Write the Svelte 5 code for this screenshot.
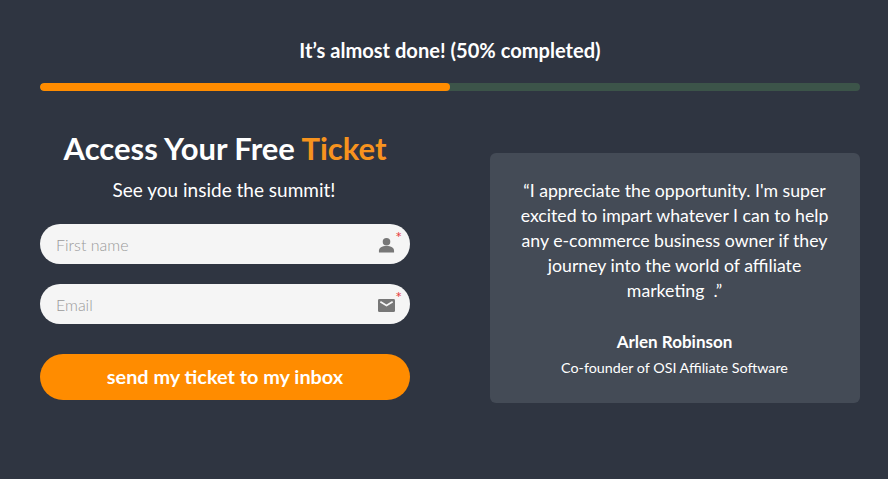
<script>
  const fields = [
    { placeholder: 'First name', icon: 'user' },
    { placeholder: 'Email', icon: 'mail' }
  ];
</script>

<main class="page">
  <h2 class="status">It’s almost done! (50% completed)</h2>
  <div class="track"><div class="fill" style="width: 50%"></div></div>
  <div class="columns">
    <section class="form">
      <h1>Access Your Free <span>Ticket</span></h1>
      <p class="sub">See you inside the summit!</p>
      <div class="fields">
        {#each fields as f}
          <div class="field">
            <input placeholder={f.placeholder} aria-label={f.placeholder} />
            <span class="icon">
              {#if f.icon === 'user'}
                <svg width="17" height="18" viewBox="0 0 18 18"><circle cx="9" cy="5.5" r="4" fill="#777"/><path d="M1 17v-2c0-3 3-5 8-5s8 2 8 5v2z" fill="#777"/></svg>
              {:else}
                <svg width="17" height="15" viewBox="0 0 18 15"><rect y="0.5" width="18" height="14" rx="1.5" fill="#777"/><path d="M2.5 3.5l6.5 4 6.5-4" fill="none" stroke="#f5f5f5" stroke-width="1.8"/></svg>
              {/if}
              <span class="star">*</span>
            </span>
          </div>
        {/each}
      </div>
      <button><span class="label">send my ticket to my inbox</span></button>
    </section>
    <aside class="quote">
      <p class="text">“I appreciate the opportunity. I'm super excited to impart whatever I can to help any e-commerce business owner if they journey into the world of affiliate marketing &nbsp;.”</p>
      <p class="name">Arlen Robinson</p>
      <p class="role">Co-founder of OSI Affiliate Software</p>
    </aside>
  </div>
</main>

<style>
  :global(body) { margin: 0; background: #2f3541; }
  .page {
    box-sizing: border-box;
    height: 479px;
    padding: 38px 28px 0 40px;
    background: #2f3541;
    color: #fff;
    font-family: Lato, sans-serif;
  }
  .status { margin: 0; font-size: 20.1px; line-height: 25px; font-weight: 700; text-align: center; }
  .track { height: 8px; margin-top: 20px; border-radius: 4px; background: #3c5449; overflow: hidden; }
  .fill { height: 100%; background: #ff8c00; border-radius: 4px; }
  .columns { display: flex; justify-content: space-between; align-items: flex-start; margin-top: 39px; }
  .form { width: 370px; }
  h1 { margin: 0; font-size: 31px; line-height: 36px; font-weight: 700; text-align: center; }
  h1 span { color: #f7931e; }
  .sub { margin: 12px 2px 0 0; font-size: 19px; line-height: 24px; text-align: center; }
  .fields { display: flex; flex-direction: column; gap: 20px; margin-top: 22px; }
  .field { position: relative; }
  input {
    display: block; box-sizing: border-box; width: 100%; height: 40px;
    padding: 0 50px 0 16px; border: 0; border-radius: 20px; background: #f5f5f5;
    font: 300 16px Lato, sans-serif; color: #333; outline: none;
  }
  input::placeholder { color: #9a9a9a; opacity: 1; }
  .icon { position: absolute; right: 15px; top: 12px; display: flex; width: 17px; height: 18px; align-items: center; }
  .star { position: absolute; right: -7px; top: -7px; color: #e8403f; font-size: 16px; line-height: 16px; font-weight: 400; }
  button {
    display: block; width: 100%; height: 46px; margin-top: 30px; padding: 0 0 2px; border: 0; border-radius: 23px;
    background: #ff8c00; color: #fff; font: 700 19.85px Lato, sans-serif;
  }
  .quote {
    box-sizing: border-box; width: 370px; height: 250px; margin-top: 23px; padding: 25px 30px 0;
    background: #444b56; border-radius: 6px; text-align: center;
  }
  .text { margin: 0 1px 0 0; font-size: 17.7px; line-height: 25px; }
  .name { margin: 26px 1px 0 0; font-size: 17px; line-height: 25px; font-weight: 700; }
  .role { margin: 4px 1px 0 0; font-size: 14.3px; line-height: 20px; }
</style>
